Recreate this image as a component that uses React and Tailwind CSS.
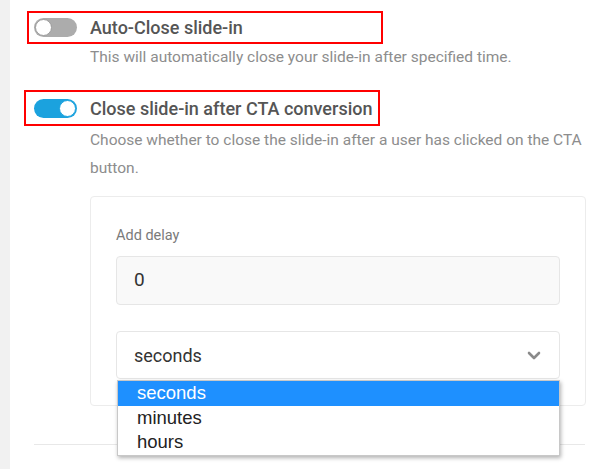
import { useState } from 'react';

function Toggle({ on }) {
  return (
    <div
      className={`relative h-[19px] w-[43px] shrink-0 rounded-full ${on ? 'bg-[#1ba2de]' : 'bg-[#acacac]'}`}
    >
      <div
        className={`absolute top-[1px] h-[17px] w-[17px] rounded-full bg-white ${
          on ? 'right-[1px] border border-[#1ba2de]' : 'left-[1px] border border-[#9c9c9c]'
        }`}
      />
    </div>
  );
}

const UNITS = ['seconds', 'minutes', 'hours'];

export default function App() {
  const [unit] = useState('seconds');

  return (
    <div className="flex h-[469px] w-[600px] overflow-hidden bg-white font-['Roboto',sans-serif]">
      {/* side strip */}
      <div className="w-[10px] shrink-0 bg-[#f1f1f1]" />

      <div className="flex flex-1 flex-col">
        {/* Auto close */}
        <div className="ml-[17px] mt-[11px] flex h-[33px] w-[356px] items-center gap-[13px] border-2 border-[#ff0000] pl-[5px]">
          <Toggle on={false} />
          <span className="text-[18px] font-medium text-[#555]">Auto-Close slide-in</span>
        </div>
        <p className="ml-[80px] mt-[1px] text-[15.5px] leading-[24px] text-[#8d8d8d]">
          This will automatically close your slide-in after specified time.
        </p>

        {/* CTA conversion */}
        <div className="ml-[14px] mt-[21px] flex h-[36px] w-[356px] items-center gap-[13px] border-2 border-[#ff0000] pl-[8px]">
          <Toggle on />
          <span className="text-[18px] font-medium text-[#555]">Close slide-in after CTA conversion</span>
        </div>
        <p className="ml-[80px] w-[505px] text-[15.5px] leading-[28px] text-[#8d8d8d]">
          Choose whether to close the slide-in after a user has clicked on the CTA button.
        </p>

        {/* delay panel */}
        <div className="relative ml-[80px] mt-[14px] w-[496px] rounded-[4px] border border-[#ececec] px-[25px] pb-[26px] pt-[26px]">
          <div className="text-[14.5px] leading-[26px] text-[#7a7a7a]">Add delay</div>
          <div className="mt-[7px] flex h-[49px] items-center rounded-[4px] border border-[#e6e6e6] bg-[#f9f9f9] pl-[17px] text-[19px] text-[#333]">
            0
          </div>
          <div className="relative mt-[26px]">
            <div className="flex h-[48px] items-center justify-between rounded-[4px] border border-[#e6e6e6] bg-white pl-[17px] pr-[18px] text-[18px] text-[#333]">
              <span>{unit}</span>
              <svg width="14" height="9" viewBox="0 0 14 9" fill="none">
                <path d="M2 2l5 5 5-5" stroke="#8a8a8a" strokeWidth="2.6" strokeLinecap="round" strokeLinejoin="round" />
              </svg>
            </div>
            {/* native-looking option list */}
            <ul className="absolute left-[1px] right-0 top-[49px] z-10 border border-[#c8c8c8] bg-white font-['Liberation_Sans',Arial,sans-serif] text-[18.5px] text-[#222] shadow-[1px_2px_4px_rgba(0,0,0,0.3)]">
              {UNITS.map((u) => (
                <li
                  key={u}
                  className={`h-[24.5px] pl-[19px] leading-[24.5px] ${u === unit ? 'bg-[#1e90ff] text-white' : ''}`}
                >
                  {u}
                </li>
              ))}
            </ul>
          </div>
        </div>

        <div className="ml-[24px] mt-[38px] h-px w-[551px] bg-[#e8e8e8]" />
      </div>
    </div>
  );
}
